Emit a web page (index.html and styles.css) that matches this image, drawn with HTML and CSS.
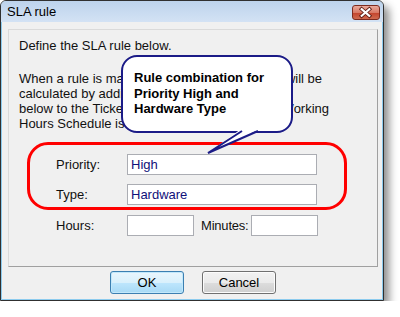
FILE: index.html
```html
<!DOCTYPE html>
<html lang="en">
<head>
    <meta charset="UTF-8">
    <title>SLA rule</title>
    <link rel="stylesheet" href="styles.css">
</head>
<body>
    <div class="window">
        <div class="titlebar">
            <span class="title">SLA rule</span>
            <span class="close">
                <svg width="28" height="15" viewBox="0 0 28 15">
                    <path d="M10 4 L18 11 M18 4 L10 11" stroke="#5a1a12" stroke-width="4" stroke-linecap="square"/>
                    <path d="M10 4 L18 11 M18 4 L10 11" stroke="#fff" stroke-width="2.2" stroke-linecap="square"/>
                </svg>
            </span>
        </div>
        <div class="frame">
            <div class="panel">
                <p class="intro">Define the SLA rule below.</p>
                <p class="info">When a rule is matched, the ticket's Due Date will be<br>calculated by adding the Hours and Minutes<br>below to the Ticket's Created Date/Time. The Working<br>Hours Schedule is used.</p>

                <div class="group">
                    <div class="row">
                        <label>Priority:</label>
                        <div class="field">High</div>
                    </div>
                    <div class="row">
                        <label>Type:</label>
                        <div class="field">Hardware</div>
                    </div>
                </div>

                <div class="row hours">
                    <label>Hours:</label>
                    <div class="field small"></div>
                    <label class="minutes">Minutes:</label>
                    <div class="field small"></div>
                </div>

                <!-- annotation bubble over the form -->
                <div class="callout">
                    Rule combination for<br>Priority High and<br>Hardware Type
                    <svg class="tail" width="172" height="100" viewBox="0 0 172 100">
                        <polygon points="120,74 139,74 87,98" fill="#fff"/>
                        <polyline points="121,76 87,98 137,76" fill="none" stroke="#1b1b87" stroke-width="2"/>
                    </svg>
                </div>
            </div>
            <div class="buttons">
                <button class="btn default">OK</button>
                <button class="btn">Cancel</button>
            </div>
        </div>
    </div>
</body>
</html>
```

FILE: styles.css
```css
body {
    margin: 0;
    background: #fff;
    font-family: "Liberation Sans", Arial, sans-serif;
    font-size: 13px;
    color: #111;
}
.window {
    width: 384px;
    height: 301px;
    box-sizing: border-box;
    border: 1px solid #303030;
    border-radius: 6px 6px 0 0;
    background: #f0f0f0;
    box-shadow: inset 0 0 0 1px #8ccbee, 5px 6px 8px rgba(0, 0, 0, 0.45);
    display: flex;
    flex-direction: column;
}
.titlebar {
    height: 21px;
    display: flex;
    align-items: flex-start;
    padding: 0 3px 0 6px;
    background: linear-gradient(#bdd3ec, #d3e2f4);
    border-radius: 5px 5px 0 0;
}
.title {
    line-height: 21px;
    color: #000;
}
.close {
    margin-left: auto;
    margin-top: 4px;
    width: 28px;
    height: 15px;
    box-sizing: border-box;
    border: 1px solid #7d2b1f;
    border-radius: 3px;
    background: linear-gradient(#e9a99b 0%, #d97a66 50%, #c4452e 55%, #cf6a4f 100%);
    display: flex;
}
.close svg {
    margin: -1px 0 0 -1px;
}
.frame {
    flex: 1;
    padding: 7px 5px 0 7px;
    display: flex;
    flex-direction: column;
}
.panel {
    position: relative;
    height: 238px;
    box-sizing: border-box;
    border: 1px solid;
    border-color: #dadada #a0a0a0 #a0a0a0 #dadada;
    padding: 8px 10px 0 10px;
    overflow: hidden;
}
.intro {
    margin: 0;
    line-height: 15px;
    white-space: nowrap;
}
.info {
    margin: 18px 0 0;
    line-height: 15px;
    white-space: nowrap;
}
.group {
    margin: 11px 0 0 8px;
    width: 320px;
    height: 68px;
    box-sizing: border-box;
    border: 3px solid #f00;
    border-radius: 21px;
    padding: 9px 0 0 26px;
    display: flex;
    flex-direction: column;
    gap: 9px;
}
.row {
    display: flex;
    align-items: center;
    height: 21px;
}
.row label {
    width: 71px;
}
.field {
    width: 190px;
    height: 21px;
    box-sizing: border-box;
    border: 1px solid #abadb3;
    background: #fff;
    padding-left: 3px;
    line-height: 19px;
    color: #10107a;
}
.hours {
    margin: 5px 0 0 37px;
}
.field.small {
    width: 67px;
}
.row label.minutes {
    width: auto;
    margin: 0 2px 0 7px;
    letter-spacing: -0.2px;
}
.callout {
    position: absolute;
    left: 112px;
    top: 25px;
    width: 172px;
    height: 78px;
    box-sizing: border-box;
    border: 2px solid #1b1b87;
    border-radius: 16px;
    background: #fff;
    padding: 13px 0 0 11px;
    font-weight: bold;
    line-height: 15.5px;
    color: #000;
}
.tail {
    position: absolute;
    left: -2px;
    top: -2px;
    overflow: visible;
}
.buttons {
    display: flex;
    justify-content: center;
    gap: 18px;
    margin-top: 4px;
}
.btn {
    width: 74px;
    height: 23px;
    padding: 0;
    font-family: "Liberation Sans", Arial, sans-serif;
    font-size: 13px;
    color: #000;
    border: 1px solid #707070;
    border-radius: 3px;
    background: linear-gradient(#f2f2f2 0%, #ebebeb 50%, #dddddd 51%, #cfcfcf 100%);
    box-shadow: inset 0 0 0 1px #fcfcfc;
}
.btn.default {
    border-color: #3c7fb1;
    background: linear-gradient(#eaf6fd 0%, #d9f0fc 50%, #bee6fd 51%, #a7d9f5 100%);
    box-shadow: inset 0 0 0 1px #c2e8fb;
}
```
